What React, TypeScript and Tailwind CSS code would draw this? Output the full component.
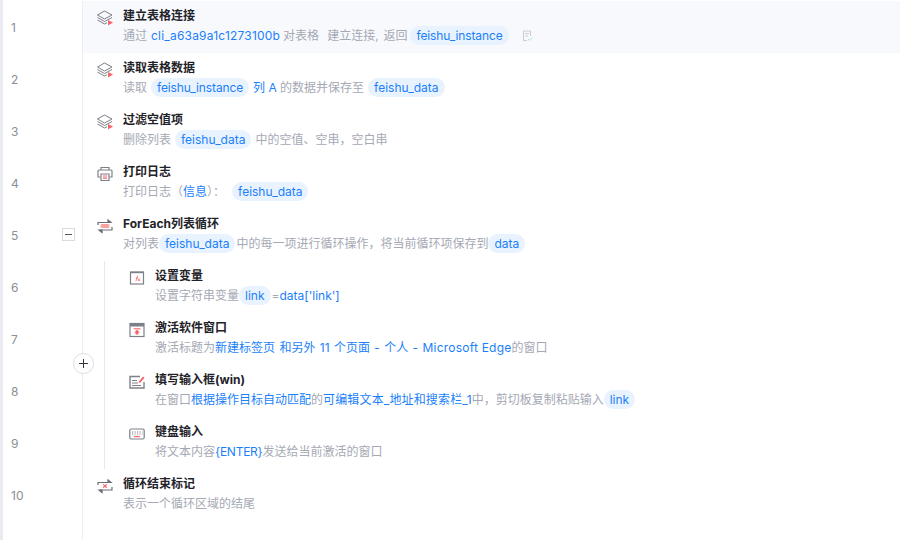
import type { ReactNode } from 'react';

const GRAY = '#7d8088';
const RED = '#f7656b';

function StackIcon() {
  return (
    <svg className="-ml-px -mt-px" width="18" height="18" viewBox="0 0 18 18" fill="none" stroke={GRAY} strokeWidth="1">
      <path d="M8.5 2 L16 6 L8.5 10 L1.5 6 Z" />
      <path d="M1.5 8.5 L8.5 12.5 L16 8.5" />
      <path d="M1.5 11 L8.5 15 L11 13.7" />
      <path d="M12 11 L17 13.5 L12 16.5 Z" fill={RED} stroke="none" />
    </svg>
  );
}

function PrinterIcon() {
  return (
    <svg width="16" height="16" viewBox="0 0 16 16" fill="none" stroke={GRAY} strokeWidth="1.2">
      <path d="M4 4 V1.5 H12 V4" />
      <path d="M3.5 11 H1 V5 Q1 4 2 4 H14 Q15 4 15 5 V11 H12.5" />
      <path d="M4 8 H12 V14.5 H4 Z" />
      <path d="M6 10 H10 M6 12.2 H10" stroke={RED} />
    </svg>
  );
}

function LoopIcon({ end }: { end?: boolean }) {
  return (
    <svg width="16" height="16" viewBox="0 0 16 16" fill="none" stroke="#6b6e76" strokeWidth="1.2">
      <path d="M1 7 V4.5 H13" />
      <path d="M11 2 L14 4.5 L11 4.5 Z" fill="#6b6e76" />
      <path d="M15 9 V12 H3" />
      <path d="M5 14.5 L2 12 L5 12 Z" fill="#6b6e76" />
      {end ? (
        <path d="M6.2 6.4 L9.8 9.8 M9.8 6.4 L6.2 9.8" stroke={RED} />
      ) : (
        <>
          <rect x="3.5" y="6" width="9" height="4" fill="#fbc0c2" stroke="none" />
          <path d="M4.5 7 H11.5 M4.5 9 H11.5" stroke={RED} strokeWidth="0.7" />
        </>
      )}
    </svg>
  );
}

function FxIcon() {
  return (
    <svg width="16" height="16" viewBox="0 0 16 16" fill="none">
      <rect x="1.5" y="2" width="13" height="12" stroke={GRAY} strokeWidth="1.2" />
      <path d="M1.5 2.5 H14.5" stroke={GRAY} strokeWidth="1.4" />
      <path d="M6.5 11 Q7.5 11 7.7 9 L8 7 Q8.2 5.8 9.2 5.8 M6.8 8 H9 M9 8.5 L11 11 M11 8.5 L9 11" stroke={RED} strokeWidth="0.8" />
    </svg>
  );
}

function WindowIcon() {
  return (
    <svg width="16" height="16" viewBox="0 0 16 16" fill="none">
      <rect x="1" y="1.5" width="14" height="13" stroke={GRAY} strokeWidth="1.2" />
      <rect x="1" y="1.5" width="14" height="3" fill={GRAY} />
      <path d="M4.5 6.8 H11.5" stroke={RED} strokeWidth="1.1" />
      <path d="M8 7.8 L11 10.5 H9.4 V12.5 H6.6 V10.5 H5 Z" fill={RED} />
    </svg>
  );
}

function InputIcon() {
  return (
    <svg width="16" height="16" viewBox="0 0 16 16" fill="none">
      <path d="M11 2.5 H1 V14 H15 V8" stroke={GRAY} strokeWidth="1.4" />
      <path d="M3 6.5 H8 M3 9 H9 M3 11.5 H12" stroke={GRAY} strokeWidth="1.1" />
      <path d="M9.5 8 L14 2.5 L15.5 3.7 L11 9 Z" fill={RED} />
    </svg>
  );
}

function KeyboardIcon() {
  return (
    <svg width="16" height="16" viewBox="0 0 16 16" fill="none">
      <rect x="0.8" y="3" width="14.4" height="10" rx="1.5" stroke={GRAY} strokeWidth="1.2" />
      <path d="M3 6 H4.2 M5.5 6 H6.7 M8 6 H9.2 M10.5 6 H11.7 M13 6 H13.6" stroke={GRAY} />
      <path d="M3 8 H4.2 M5.5 8 H6.7 M8 8 H9.2 M10.5 8 H11.7 M13 8 H13.6" stroke={GRAY} />
      <path d="M5 10.6 H11" stroke={RED} strokeWidth="1.2" />
    </svg>
  );
}

function NoteIcon() {
  return (
    <svg className="ml-[13px] shrink-0" width="12" height="12" viewBox="0 0 12 12" fill="none" stroke="#c9ccd2">
      <path d="M5 10.5 H1.5 V1 H8.5 V6" />
      <path d="M3 3.5 H7 M3 6 H6" />
      <path d="M6 9 L7.5 10.5 L10.5 7.5" stroke="#b5e0c4" />
    </svg>
  );
}

function Chip({ children, className = 'mx-1' }: { children: ReactNode; className?: string }) {
  return <span className={`h-[19px] leading-[19px] rounded-full bg-[#e9f3ff] px-[6px] text-[#1b7ffa] ${className}`}>{children}</span>;
}

function Blue({ children, className = '' }: { children: ReactNode; className?: string }) {
  return <span className={`text-[#1b7ffa] ${className}`}>{children}</span>;
}

type Step = { icon: ReactNode; title: string; desc: ReactNode; nested?: boolean; active?: boolean; toggle?: boolean };

const steps: Step[] = [
  {
    icon: <StackIcon />,
    title: '建立表格连接',
    active: true,
    desc: (
      <>
        通过<Blue className="ml-[4px] tracking-[0.2px]">cli_a63a9a1c1273100b</Blue>
        <span className="ml-[3px]">对表格</span>
        <span className="ml-[8px] [word-spacing:1.5px]">建立连接, 返回</span>
        <Chip className="ml-[3px] tracking-[-0.13px]">feishu_instance</Chip>
        <NoteIcon />
      </>
    ),
  },
  {
    icon: <StackIcon />,
    title: '读取表格数据',
    desc: (
      <>
        读取<Chip className="mx-[4px] tracking-[-0.13px]">feishu_instance</Chip><Blue>列 A</Blue>&nbsp;的数据并保存至<Chip>feishu_data</Chip>
      </>
    ),
  },
  {
    icon: <StackIcon />,
    title: '过滤空值项',
    desc: (
      <>
        删除列表<Chip>feishu_data</Chip>中的空值、空串，空白串
      </>
    ),
  },
  {
    icon: <PrinterIcon />,
    title: '打印日志',
    desc: (
      <>
        打印日志（<Blue>信息</Blue>）：<Chip className="ml-[7px]">feishu_data</Chip>
      </>
    ),
  },
  {
    icon: <LoopIcon />,
    title: 'ForEach列表循环',
    toggle: true,
    desc: (
      <>
        对列表<Chip className="mr-px">feishu_data</Chip>中的每一项进行循环操作，将当前循环项保存到<Chip className="mx-0">data</Chip>
      </>
    ),
  },
  {
    icon: <FxIcon />,
    title: '设置变量',
    nested: true,
    desc: (
      <>
        设置字符串变量<Chip className="mx-0">link</Chip><span className="ml-px">=</span><Blue>data['link']</Blue>
      </>
    ),
  },
  {
    icon: <WindowIcon />,
    title: '激活软件窗口',
    nested: true,
    desc: (
      <>
        激活标题为<Blue className="whitespace-pre [word-spacing:1px]">新建标签页 和另外 11 个页面 - 个人 - </Blue>
        <Blue className="tracking-[0.22px]">Microsoft Edge</Blue>的窗口
      </>
    ),
  },
  {
    icon: <InputIcon />,
    title: '填写输入框(win)',
    nested: true,
    desc: (
      <>
        在窗口<Blue>根据操作目标自动匹配</Blue>的<Blue className="tracking-[0.15px]">可编辑文本_地址和搜索栏_1</Blue>中，剪切板复制粘贴输入<Chip className="mx-0">link</Chip>
      </>
    ),
  },
  {
    icon: <KeyboardIcon />,
    title: '键盘输入',
    nested: true,
    desc: (
      <>
        将文本内容<Blue className="tracking-[-0.25px]">{'{ENTER}'}</Blue>发送给当前激活的窗口
      </>
    ),
  },
  { icon: <LoopIcon end />, title: '循环结束标记', desc: '表示一个循环区域的结尾' },
];

function Row({ step, index }: { step: Step; index: number }) {
  return (
    <div className="flex h-[52px]">
      <div className="relative flex w-[80px] shrink-0 items-center border-r border-[#eceef2] pl-[8px] text-[12px] text-[#8a8e96]">
        <span className="mt-[2px]">{index + 1}</span>
        {step.toggle && (
          <div className="absolute left-[59px] top-[19px] flex h-[13px] w-[13px] items-center justify-center border border-[#d9dbe0] bg-white">
            <div className="h-px w-[7px] bg-[#55585f]" />
          </div>
        )}
      </div>
      <div className={`flex min-w-0 flex-1 ${step.active ? 'bg-[#f7f9fd]' : ''}`}>
        {step.nested && <div className="ml-[21px] w-[11px] shrink-0 border-l border-[#e6e8ec]" />}
        <div className="w-[40px] shrink-0 pl-[14px] pt-[9px]">{step.icon}</div>
        <div className="min-w-0">
          <div className="mt-[6px] h-[18px] text-[12px] font-bold leading-[18px] text-[#1f2329]">{step.title}</div>
          <div className="mt-px flex h-[19px] items-center whitespace-nowrap text-[12px] leading-[19px] text-[#a5a9b4]">{step.desc}</div>
        </div>
      </div>
    </div>
  );
}

export default function App() {
  return (
    <div className="relative h-[540px] w-[900px] overflow-hidden bg-white pt-px font-['Inter','Noto_Sans_CJK_SC',sans-serif]">
      <div className="absolute inset-y-0 left-0 w-[3px] bg-[#e9ebf0]" />
      <div className="ml-[3px]">
        {steps.map((step, i) => (
          <Row key={step.title} step={step} index={i} />
        ))}
      </div>
      <div className="ml-[3px] h-[20px] w-[80px] border-r border-[#eceef2]" />
      {/* add step button hovers over the gutter line */}
      <div className="absolute left-[73px] top-[353px] flex h-[21px] w-[21px] items-center justify-center rounded-full border border-[#dcdee3] bg-white">
        <svg width="11" height="11" viewBox="0 0 11 11" stroke="#33363c" strokeWidth="1">
          <path d="M5.5 1 V10 M1 5.5 H10" />
        </svg>
      </div>
    </div>
  );
}
